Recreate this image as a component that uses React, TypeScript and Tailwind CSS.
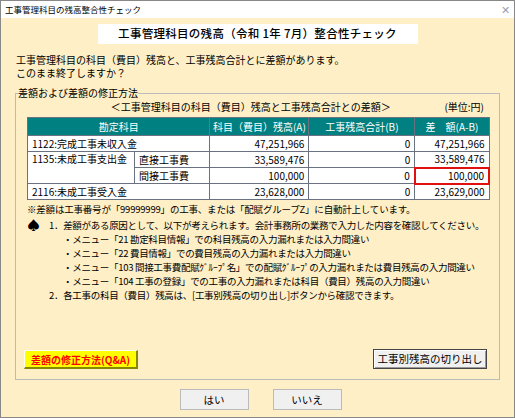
export default function App() {
  const f = { fontFamily: '"Noto Sans CJK JP", sans-serif' };
  const td = "border border-gray-500 px-1 h-[16px] leading-[14px] whitespace-nowrap";
  return (
    <div style={f} className="w-[515px] h-[418px] bg-[#ffefc6] border border-[#888] flex flex-col text-[10.5px] text-black overflow-hidden whitespace-nowrap">
      <div className="h-[17px] bg-white flex items-center justify-between px-1 text-[8.5px]">
        <span>工事管理科目の残高整合性チェック</span><span className="text-gray-400 text-[11px]">✕</span>
      </div>
      <div className="flex justify-center mt-[6px]">
        <div className="w-[320px] h-[20px] bg-white flex items-center justify-center font-medium text-[11.5px] tracking-wide">工事管理科目の残高（令和 1年 7月）整合性チェック</div>
      </div>
      <div className="ml-[15px] mt-[9px] leading-[13px] text-[10px]">工事管理科目の科目（費目）残高と、工事残高合計とに差額があります。<br />このまま終了しますか？</div>
      <div className="relative mx-[14px] mt-[14px] h-[287px] border border-[#bbb] px-[11px]">
        <span className="absolute -top-[8px] left-[2px] bg-[#ffefc6] leading-[14px] text-[10px]">差額および差額の修正方法</span>
        <div className="flex mt-[6px] h-[13px] leading-[13px] text-[10px]">
          <span className="flex-1 text-center pl-[30px]">＜工事管理科目の科目（費目）残高と工事残高合計との差額＞</span>
          <span className="pr-1">(単位:円)</span>
        </div>
        <table className="w-[463px] border-collapse bg-white text-[10px] mt-[4px]">
          <thead>
            <tr className="bg-[#008080] text-white h-[18px]">
              <th colSpan={2} className="border border-gray-500 font-normal w-[167px]">勘定科目</th>
              <th className="border border-gray-500 font-normal w-[99px]">科目（費目）残高(A)</th>
              <th className="border border-gray-500 font-normal w-[106px]">工事残高合計(B)</th>
              <th className="border border-gray-500 font-normal">差　額(A-B)</th>
            </tr>
          </thead>
          <tbody>
            <tr><td colSpan={2} className={td}>1122:完成工事未収入金</td><td className={td + " text-right"}>47,251,966</td><td className={td + " text-right"}>0</td><td className={td + " text-right"}>47,251,966</td></tr>
            <tr><td rowSpan={2} className={td + " align-top w-[107px]"}>1135:未成工事支出金</td><td className={td}>直接工事費</td><td className={td + " text-right"}>33,589,476</td><td className={td + " text-right"}>0</td><td className={td + " text-right"}>33,589,476</td></tr>
            <tr><td className={td}>間接工事費</td><td className={td + " text-right"}>100,000</td><td className={td + " text-right"}>0</td><td className="border-2 border-[#e01010] px-1 text-right h-[16px] leading-[12px]">100,000</td></tr>
            <tr><td colSpan={2} className={td}>2116:未成工事受入金</td><td className={td + " text-right"}>23,628,000</td><td className={td + " text-right"}>0</td><td className={td + " text-right"}>23,629,000</td></tr>
          </tbody>
        </table>
        <div className="mt-[2px] leading-[14px] text-[9.5px] tracking-[-0.2px]">※差額は工事番号が「99999999」の工事、または「配賦グループZ」に自動計上しています。</div>
        <div className="flex mt-[2px] leading-[14px] text-[9.5px] tracking-[-0.3px]">
          <span className="w-[16px] text-[13px] leading-[14px]">♠</span>
          <div className="pl-[6px]">
            <div>1．差額がある原因として、以下が考えられます。会計事務所の業務で入力した内容を確認してください。</div>
            <div className="pl-[14px]">・メニュー「21 勘定科目情報」での科目残高の入力漏れまたは入力間違い</div>
            <div className="pl-[14px]">・メニュー「22 費目情報」での費目残高の入力漏れまたは入力間違い</div>
            <div className="pl-[14px]">・メニュー「103 間接工事費配賦ｸﾞﾙｰﾌﾟ名」での配賦ｸﾞﾙｰﾌﾟの入力漏れまたは費目残高の入力間違い</div>
            <div className="pl-[14px]">・メニュー「104 工事の登録」での工事の入力漏れまたは科目（費目）残高の入力間違い</div>
            <div>2．各工事の科目（費目）残高は、[工事別残高の切り出し]ボタンから確認できます。</div>
          </div>
        </div>
        <div className="absolute left-[8px] right-[12px] bottom-[10px] flex justify-between items-end">
          <button className="w-[114px] h-[19px] bg-[#ffff00] text-[#ff0000] font-bold text-[10px] border border-[#fffff0] border-r-[#888800] border-b-[#888800] border-r-2 border-b-2">差額の修正方法(Q&amp;A)</button>
          <button className="w-[114px] h-[20px] bg-[#f0f0f0] border border-[#444] text-[10.5px] shadow-[inset_1px_1px_0_#fff,inset_-1px_-1px_0_#999]">工事別残高の切り出し</button>
        </div>
      </div>
      <div className="flex justify-center gap-[24px] mt-[9px] pl-[6px]">
        <button className="w-[69px] h-[21px] bg-[#f0f0f0] border border-[#bbb]">はい</button>
        <button className="w-[69px] h-[21px] bg-[#f0f0f0] border border-[#bbb]">いいえ</button>
      </div>
    </div>
  );
}
